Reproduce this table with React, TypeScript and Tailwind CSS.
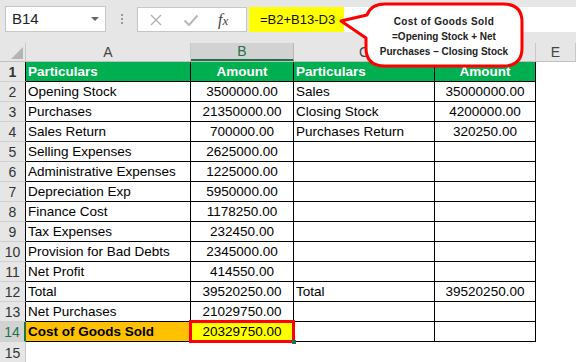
import React from 'react';

const font = { fontFamily: '"Liberation Sans", Arial, sans-serif' };

type Row = { a: string; b: string; c?: string; d?: string };

const rows: Row[] = [
  { a: 'Opening Stock', b: '3500000.00', c: 'Sales', d: '35000000.00' },
  { a: 'Purchases', b: '21350000.00', c: 'Closing Stock', d: '4200000.00' },
  { a: 'Sales Return', b: '700000.00', c: 'Purchases Return', d: '320250.00' },
  { a: 'Selling Expenses', b: '2625000.00' },
  { a: 'Administrative Expenses', b: '1225000.00' },
  { a: 'Depreciation Exp', b: '5950000.00' },
  { a: 'Finance Cost', b: '1178250.00' },
  { a: 'Tax Expenses', b: '232450.00' },
  { a: 'Provision for Bad Debts', b: '2345000.00' },
  { a: 'Net Profit', b: '414550.00' },
  { a: 'Total', b: '39520250.00', c: 'Total', d: '39520250.00' },
  { a: 'Net Purchases', b: '21029750.00' },
];

function RowHead({ n, selected }: { n: number; selected?: boolean }) {
  return (
    <div
      className={`w-[26px] shrink-0 flex items-center justify-center pt-[2px] text-[14px] border-b border-b-[#d0d0d0] border-r ${
        selected ? 'bg-[#d2d2d2] text-[#217346] border-r-[#217346] border-r-2' : 'bg-[#e6e6e6] text-[#333] border-r-black'
      }`}
    >
      {n}
    </div>
  );
}

function Toolbar() {
  return (
    <div className="h-[43px] bg-[#e6e6e6] flex items-start pt-[6px] pl-[5px]">
      <div className="w-[101px] h-[26px] bg-white border border-[#c6c6c6] flex items-center justify-between pl-[6px] pr-[6px]">
        <span className="text-[15px] text-[#222]">B14</span>
        <svg width="8" height="5" viewBox="0 0 8 5">
          <path d="M0 0 H8 L4 4 Z" fill="#666" />
        </svg>
      </div>
      <div className="w-[31px] h-[26px] flex flex-col items-center justify-center gap-[2px]">
        <div className="w-[2px] h-[2px] bg-[#9a9a9a]" />
        <div className="w-[2px] h-[2px] bg-[#9a9a9a]" />
        <div className="w-[2px] h-[2px] bg-[#9a9a9a]" />
      </div>
      <div className="mt-[1px] w-[110px] h-[25px] bg-white border border-[#c6c6c6] flex items-center">
        <svg width="14" height="14" viewBox="0 0 14 14" className="ml-[11px]">
          <path d="M2 2 L12 12 M12 2 L2 12" stroke="#b0b0b0" strokeWidth="1.4" />
        </svg>
        <svg width="16" height="14" viewBox="0 0 16 14" className="ml-[20px]">
          <path d="M1.5 7.5 L6 12 L14.5 2.5" stroke="#b8b8b8" strokeWidth="2" fill="none" />
        </svg>
        <span
          className="ml-[19px] italic text-[16px] text-[#444]"
          style={{ fontFamily: '"Liberation Serif", serif' }}
        >
          f<span className="text-[13px]">x</span>
        </span>
      </div>
      <div className="mt-[1px] ml-[2px] flex-1 h-[25px] bg-white flex">
        <div className="w-[95px] h-full bg-[#ffff00] flex items-center whitespace-nowrap pl-[11px] text-[13px] text-[#111]">
          =B2+B13-D3
        </div>
      </div>
    </div>
  );
}

function ColHeaders() {
  const base = 'h-full flex items-center justify-center text-[14px] text-[#444] border-r border-[#c8c8c8] bg-[#e6e6e6]';
  return (
    <div className="h-[19px] flex border-b border-[#c0c0c0]">
      <div className="w-[26px] shrink-0 bg-[#e6e6e6] border-r border-[#c8c8c8] relative">
        <svg width="12" height="12" viewBox="0 0 12 12" className="absolute right-[2px] bottom-[2px]">
          <path d="M12 0 V12 H0 Z" fill="#b4b4b4" />
        </svg>
      </div>
      <div className={`w-[165px] ${base}`}>A</div>
      <div className="w-[103px] h-full flex items-center justify-center text-[14px] text-[#217346] bg-[#d2d2d2] border-r border-[#b8b8b8] border-b-2 border-b-[#217346]">
        B
      </div>
      <div className={`w-[141px] ${base}`}>C</div>
      <div className={`w-[101px] ${base}`} />
      <div className={`flex-1 ${base}`}>E</div>
    </div>
  );
}

const cell = 'h-full border-r border-b border-black flex items-center pt-[2px]';

function DataRow({ n, r }: { n: number; r: Row }) {
  return (
    <div className="h-[20px] flex text-[13.5px] text-black">
      <RowHead n={n} />
      <div className={`w-[165px] pl-[2px] ${cell}`}>{r.a}</div>
      <div className={`w-[103px] justify-center ${cell}`}>{r.b}</div>
      <div className={`w-[141px] pl-[2px] ${cell}`}>{r.c}</div>
      <div className={`w-[101px] justify-center ${cell}`}>{r.d}</div>
      <div className="flex-1 bg-white" />
    </div>
  );
}

function Callout() {
  return (
    <div className="absolute left-[335px] top-0 w-[192px] h-[70px]">
      <svg width="192" height="70" viewBox="0 0 192 70" className="absolute inset-0">
        <path
          d="M50 4 H168 Q187 4 187 22 V48 Q187 66 168 66 H50 Q31 66 31 48 V38 L6 21 L32 15 Q36 4 50 4 Z"
          fill="white"
          stroke="#ff0000"
          strokeWidth="3"
          strokeLinejoin="round"
        />
      </svg>
      <div
        className="absolute left-[31px] w-[156px] top-[14px] text-center font-bold text-[10px] leading-[15px] text-[#222] whitespace-nowrap"
        style={font}
      >
        <div className="tracking-[0.4px]">Cost of Goods Sold</div>
        <div>=Opening Stock + Net</div>
        <div>Purchases – Closing Stock</div>
      </div>
    </div>
  );
}

export default function App() {
  return (
    <div className="relative w-[576px] h-[362px] overflow-hidden bg-white" style={font}>
      <Toolbar />
      <ColHeaders />
      <div className="h-[20px] flex text-[13.5px] font-bold text-white">
        <RowHead n={1} />
        <div className={`w-[165px] pl-[2px] bg-[#00b050] ${cell}`}>Particulars</div>
        <div className={`w-[103px] justify-center bg-[#00b050] ${cell}`}>Amount</div>
        <div className={`w-[141px] pl-[2px] bg-[#00b050] ${cell}`}>Particulars</div>
        <div className={`w-[101px] justify-center bg-[#00b050] ${cell}`}>Amount</div>
        <div className="flex-1 bg-white" />
      </div>
      {rows.map((r, i) => (
        <DataRow key={i} n={i + 2} r={r} />
      ))}
      <div className="h-[20px] flex text-[13.5px] text-black">
        <RowHead n={14} selected />
        <div className={`w-[165px] pl-[2px] bg-[#ffc000] font-bold ${cell}`}>Cost of Goods Sold</div>
        <div className={`w-[103px] justify-center bg-[#ffff00] relative ${cell}`}>
          20329750.00
          <div className="absolute -left-[2px] -top-[2px] -right-[2px] -bottom-[2px] border-[3px] border-[#ff0000]" />
          <div className="absolute -right-[3px] -bottom-[3px] w-[4px] h-[4px] bg-[#217346]" />
        </div>
        <div className={`w-[141px] ${cell}`} />
        <div className={`w-[101px] ${cell}`} />
        <div className="flex-1 bg-white" />
      </div>
      <div className="h-[20px] flex">
        <div className="w-[26px] shrink-0 flex items-center justify-center pt-[2px] text-[14px] bg-[#e6e6e6] text-[#333] border-r border-[#c8c8c8]">
          15
        </div>
        <div className="flex-1 bg-white" />
      </div>
      <Callout />
    </div>
  );
}
